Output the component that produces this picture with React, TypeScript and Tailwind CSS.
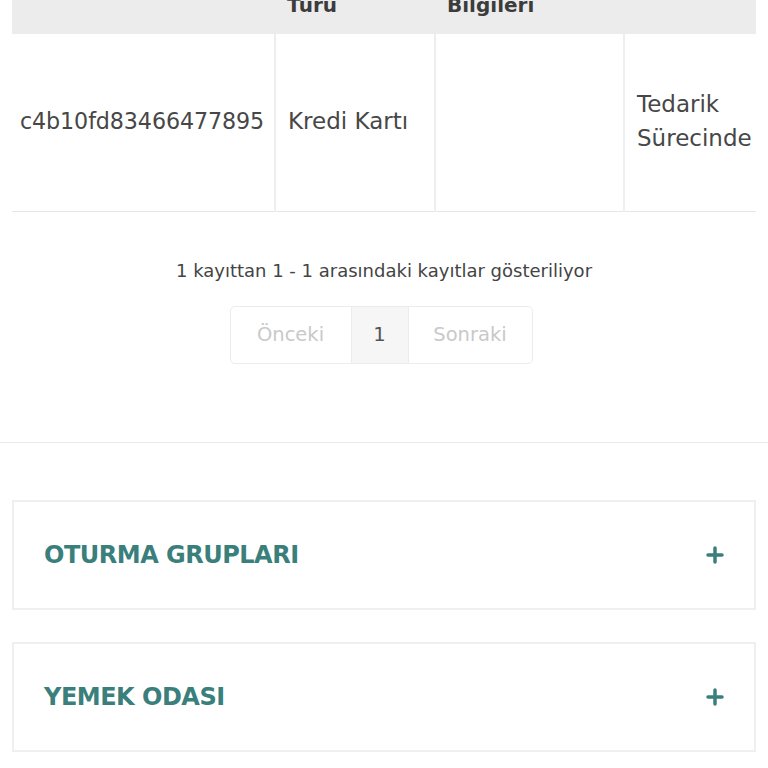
import { Plus } from 'lucide-react';

const sections = ['OTURMA GRUPLARI', 'YEMEK ODASI'];

export default function App() {
  return (
    <div className="min-h-[768px] bg-white text-[#444] overflow-hidden" style={{ fontFamily: '"DejaVu Sans", "Noto Sans", sans-serif' }}>
      <div className="px-3 overflow-hidden">
        <table className="w-full table-fixed border-collapse -mt-[52px]">
          <colgroup>
            <col className="w-[263px]" />
            <col className="w-[160px]" />
            <col className="w-[189px]" />
            <col />
          </colgroup>
          <thead>
            <tr className="bg-[#ececec] text-left text-[20px] font-bold text-[#3c3c3c] leading-[30px]">
              <th className="px-2 pt-1 pb-[14px] align-top">No</th>
              <th className="px-3 pt-3 pb-[14px] align-bottom">Ödeme<br />Türü</th>
              <th className="px-3 pt-3 pb-[14px] align-bottom">Kargo<br />Bilgileri</th>
              <th className="px-3 pt-1 pb-[14px] align-top">Durum</th>
            </tr>
          </thead>
          <tbody>
            <tr className="h-[177px] border-b border-[#e6e6e6] text-[23px] leading-[34px] text-[#474747]">
              <td className="px-2 pb-[2px] whitespace-nowrap text-[22.2px] tracking-[-0.1px]">c4b10fd83466477895</td>
              <td className="px-3 pb-[2px] border-l-2 border-[#eeeeee]">Kredi Kartı</td>
              <td className="px-3 border-l-2 border-[#eeeeee]"></td>
              <td className="px-3 pb-[2px] border-l-2 border-[#eeeeee]">Tedarik Sürecinde</td>
            </tr>
          </tbody>
        </table>
      </div>

      <div className="flex flex-col items-center pt-[47px] pb-[78px] border-b border-[#ececec]">
        <p className="text-[18px] text-[#444] leading-[24px]">1 kayıttan 1 - 1 arasındaki kayıtlar gösteriliyor</p>
        <div className="mt-[23px] -ml-[6px] flex h-[58px] border border-[#ececec] rounded-[5px] text-[19.5px] overflow-hidden">
          <span className="w-[120px] flex items-center justify-center text-[#c9c9c9]">Önceki</span>
          <span className="w-[58px] flex items-center justify-center bg-[#f6f6f6] border-x border-[#ececec] text-[#555]">1</span>
          <span className="w-[123px] flex items-center justify-center text-[#c9c9c9]">Sonraki</span>
        </div>
      </div>

      <div className="px-3 pt-[57px] flex flex-col gap-[32px]">
        {sections.map(s => (
          <div key={s} className="h-[110px] border-2 border-[#efefef] flex items-center justify-between pl-[30px] pr-[27px]">
            <h3 className="text-[24px] font-bold text-[#3a7f7c] tracking-[-0.5px]">{s}</h3>
            <Plus className="w-[24px] h-[24px] text-[#3a7f7c]" strokeWidth={3.5} />
          </div>
        ))}
      </div>
    </div>
  );
}
